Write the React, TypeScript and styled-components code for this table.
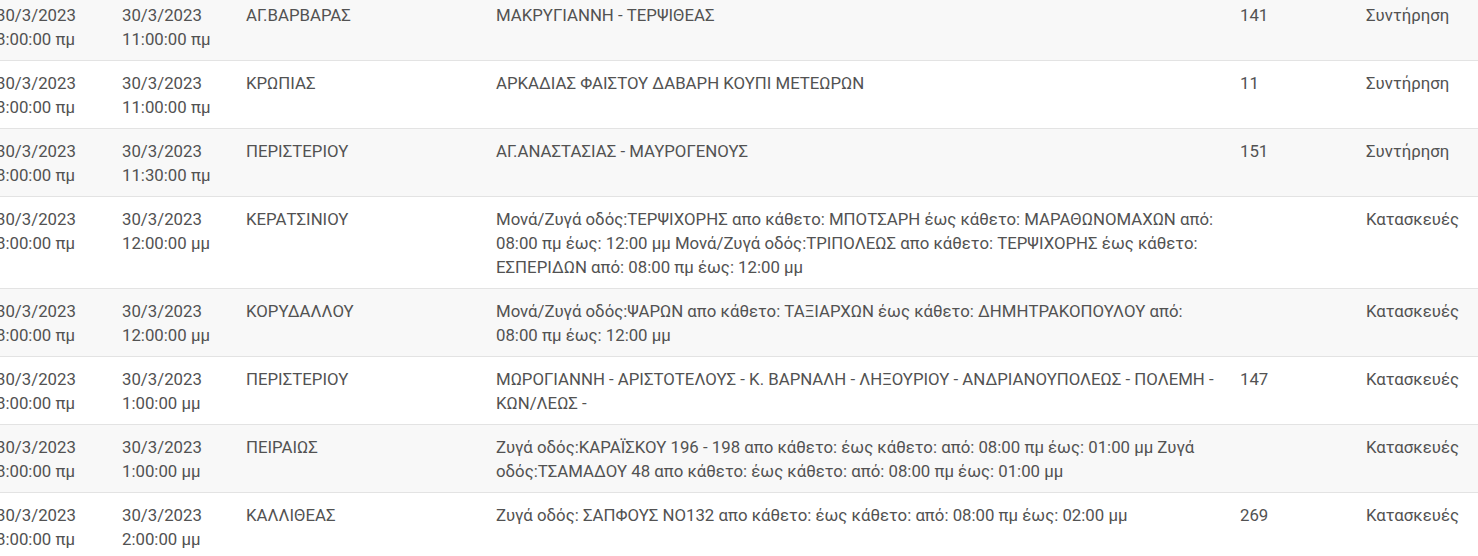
import React from "react";
import styled, { createGlobalStyle } from "styled-components";

const Global = createGlobalStyle`
  html, body { margin: 0; padding: 0; background: #ffffff; overflow: hidden; }
  body { font-family: Roboto, "Noto Sans", "Liberation Sans", sans-serif; }
`;

const Viewport = styled.div`
  width: 1478px;
  height: 556px;
  overflow: hidden;
`;

const Table = styled.table`
  margin: -8px 0 0 -12px;
  width: 1503px;
  table-layout: fixed;
  border-collapse: collapse;
  font-size: 16.8px;
  line-height: 24px;
  color: #525252;
`;

const Col = styled.col<{ $w: number }>`
  width: ${(p) => p.$w}px;
`;

const Row = styled.tr<{ $striped: boolean }>`
  background: ${(p) => (p.$striped ? "#f8f8f8" : "#ffffff")};
  border-top: 1px solid #e3e3e3;
`;

const Cell = styled.td`
  padding: 10px 8px 9px;
  vertical-align: top;
  text-align: left;
`;

type Item = {
  from: [string, string];
  to: [string, string];
  area: string;
  desc: string;
  line: string;
  kind: string;
};

const data: Item[] = [
  { from: ["30/3/2023", "8:00:00 πμ"], to: ["30/3/2023", "11:00:00 πμ"], area: "ΑΓ.ΒΑΡΒΑΡΑΣ", desc: "ΜΑΚΡΥΓΙΑΝΝΗ - ΤΕΡΨΙΘΕΑΣ", line: "141", kind: "Συντήρηση" },
  { from: ["30/3/2023", "8:00:00 πμ"], to: ["30/3/2023", "11:00:00 πμ"], area: "ΚΡΩΠΙΑΣ", desc: "ΑΡΚΑΔΙΑΣ ΦΑΙΣΤΟΥ ΔΑΒΑΡΗ ΚΟΥΠΙ ΜΕΤΕΩΡΩΝ", line: "11", kind: "Συντήρηση" },
  { from: ["30/3/2023", "8:00:00 πμ"], to: ["30/3/2023", "11:30:00 πμ"], area: "ΠΕΡΙΣΤΕΡΙΟΥ", desc: "ΑΓ.ΑΝΑΣΤΑΣΙΑΣ - ΜΑΥΡΟΓΕΝΟΥΣ", line: "151", kind: "Συντήρηση" },
  { from: ["30/3/2023", "8:00:00 πμ"], to: ["30/3/2023", "12:00:00 μμ"], area: "ΚΕΡΑΤΣΙΝΙΟΥ", desc: "Μονά/Ζυγά οδός:ΤΕΡΨΙΧΟΡΗΣ απο κάθετο: ΜΠΟΤΣΑΡΗ έως κάθετο: ΜΑΡΑΘΩΝΟΜΑΧΩΝ από: 08:00 πμ έως: 12:00 μμ Μονά/Ζυγά οδός:ΤΡΙΠΟΛΕΩΣ απο κάθετο: ΤΕΡΨΙΧΟΡΗΣ έως κάθετο: ΕΣΠΕΡΙΔΩΝ από: 08:00 πμ έως: 12:00 μμ", line: "", kind: "Κατασκευές" },
  { from: ["30/3/2023", "8:00:00 πμ"], to: ["30/3/2023", "12:00:00 μμ"], area: "ΚΟΡΥΔΑΛΛΟΥ", desc: "Μονά/Ζυγά οδός:ΨΑΡΩΝ απο κάθετο: ΤΑΞΙΑΡΧΩΝ έως κάθετο: ΔΗΜΗΤΡΑΚΟΠΟΥΛΟΥ από: 08:00 πμ έως: 12:00 μμ", line: "", kind: "Κατασκευές" },
  { from: ["30/3/2023", "8:00:00 πμ"], to: ["30/3/2023", "1:00:00 μμ"], area: "ΠΕΡΙΣΤΕΡΙΟΥ", desc: "ΜΩΡΟΓΙΑΝΝΗ - ΑΡΙΣΤΟΤΕΛΟΥΣ - Κ. ΒΑΡΝΑΛΗ - ΛΗΞΟΥΡΙΟΥ - ΑΝΔΡΙΑΝΟΥΠΟΛΕΩΣ - ΠΟΛΕΜΗ - ΚΩΝ/ΛΕΩΣ -", line: "147", kind: "Κατασκευές" },
  { from: ["30/3/2023", "8:00:00 πμ"], to: ["30/3/2023", "1:00:00 μμ"], area: "ΠΕΙΡΑΙΩΣ", desc: "Ζυγά οδός:ΚΑΡΑΪΣΚΟΥ 196 - 198 απο κάθετο: έως κάθετο: από: 08:00 πμ έως: 01:00 μμ Ζυγά οδός:ΤΣΑΜΑΔΟΥ 48 απο κάθετο: έως κάθετο: από: 08:00 πμ έως: 01:00 μμ", line: "", kind: "Κατασκευές" },
  { from: ["30/3/2023", "8:00:00 πμ"], to: ["30/3/2023", "2:00:00 μμ"], area: "ΚΑΛΛΙΘΕΑΣ", desc: "Ζυγά οδός: ΣΑΠΦΟΥΣ ΝΟ132 απο κάθετο: έως κάθετο: από: 08:00 πμ έως: 02:00 μμ", line: "269", kind: "Κατασκευές" },
];

export default function App() {
  return (
    <Viewport>
      <Global />
      <Table>
        <colgroup>
          <Col $w={126} />
          <Col $w={124} />
          <Col $w={250} />
          <Col $w={744} />
          <Col $w={126} />
          <Col $w={133} />
        </colgroup>
        <tbody>
          {data.map((d, i) => (
            <Row key={i} $striped={i % 2 === 0}>
              <Cell>
                {d.from[0]}
                <br />
                {d.from[1]}
              </Cell>
              <Cell>
                {d.to[0]}
                <br />
                {d.to[1]}
              </Cell>
              <Cell>{d.area}</Cell>
              <Cell>{d.desc}</Cell>
              <Cell>{d.line}</Cell>
              <Cell>{d.kind}</Cell>
            </Row>
          ))}
        </tbody>
      </Table>
    </Viewport>
  );
}
